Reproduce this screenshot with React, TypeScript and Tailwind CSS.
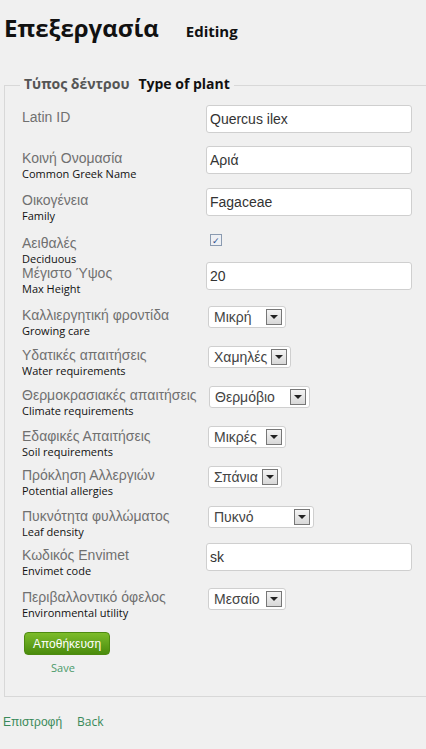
import React from "react";

const A = { fontFamily: '"Liberation Sans", Arial, sans-serif' };
const O = { fontFamily: '"Open Sans", "Noto Sans", sans-serif' };

function Sel({ v, w }: { v: string; w: number }) {
  return (
    <div className="flex items-center justify-between h-[22px] bg-white border border-[#cfcfcf] rounded-[3px] pl-[5px] pr-[3px]" style={{ width: w }}>
      <span className="text-[14px] text-[#444]" style={A}>{v}</span>
      <span className="w-[16px] h-[16px] border border-[#777] bg-gradient-to-b from-[#f4f4f4] to-[#d8d8d8] flex items-center justify-center">
        <span className="w-0 h-0 border-l-[4px] border-r-[4px] border-t-[4px] border-l-transparent border-r-transparent border-t-[#222]" />
      </span>
    </div>
  );
}

function Inp({ v }: { v: string }) {
  return (
    <div className="w-[206px] h-[28px] bg-white border border-[#cfcfcf] rounded-[3px] px-[3px] flex items-center text-[14px] text-[#333]" style={A}>{v}</div>
  );
}

function Row({ h, pt, gr, en, children }: { h: number; pt: number; gr: string; en?: string; children: React.ReactNode }) {
  return (
    <div className="flex" style={{ height: h }}>
      <div className="w-[201px] pl-[17px]" style={{ paddingTop: pt }}>
        <div className="text-[14px] leading-[18px] text-[#707070] whitespace-nowrap" style={A}>{gr}</div>
        {en && <div className="text-[11px] leading-[14px] text-[#111] whitespace-nowrap" style={O}>{en}</div>}
      </div>
      <div>{children}</div>
    </div>
  );
}

export default function App() {
  return (
    <div className="w-[426px] h-[749px] bg-[#f0f0f0] overflow-hidden relative">
      <div className="flex items-baseline pl-[4px] pt-[12px] h-[62px]">
        <span className="text-[24px] font-bold text-[#111] leading-[32px]" style={O}>Επεξεργασία</span>
        <span className="ml-[27px] text-[15px] font-bold text-[#111]" style={O}>Editing</span>
      </div>
      <div className="ml-[4px] mt-[23px] h-[612px] border border-[#d8d8d8] border-r-0 relative">
        <div className="absolute left-[15px] top-[-13px] bg-[#f0f0f0] px-[4px] flex items-baseline">
          <span className="text-[14px] font-bold text-[#555]" style={O}>Τύπος δέντρου</span>
          <span className="ml-[9px] text-[14px] font-bold text-[#111]" style={O}>Type of plant</span>
        </div>
        <div className="pt-[19px]">
          <Row h={41} pt={3} gr="Latin ID"><Inp v="Quercus ilex" /></Row>
          <Row h={42} pt={3} gr="Κοινή Ονομασία" en="Common Greek Name"><Inp v="Αριά" /></Row>
          <Row h={46} pt={3} gr="Οικογένεια" en="Family"><Inp v="Fagaceae" /></Row>
          <Row h={28} pt={0} gr="Αειθαλές" en="Deciduous">
            <div className="ml-[4px] w-[12px] h-[12px] border border-[#8a9ab0] bg-[#eef0f4] flex items-center justify-center text-[9px] text-[#2a4a8a] leading-none">✓</div>
          </Row>
          <Row h={44} pt={2} gr="Μέγιστο Ύψος" en="Max Height"><Inp v="20" /></Row>
          <Row h={40} pt={0} gr="Καλλιεργητική φροντίδα" en="Growing care"><div className="ml-[2px]"><Sel v="Μικρή" w={78} /></div></Row>
          <Row h={40} pt={0} gr="Υδατικές απαιτήσεις" en=" Water requirements"><div className="ml-[2px]"><Sel v="Χαμηλές" w={83} /></div></Row>
          <Row h={40} pt={0} gr="Θερμοκρασιακές απαιτήσεις" en=" Climate requirements"><div className="ml-[3px]"><Sel v="Θερμόβιο" w={101} /></div></Row>
          <Row h={40} pt={1} gr="Εδαφικές Απαιτήσεις" en="Soil requirements"><div className="ml-[2px]"><Sel v="Μικρές" w={78} /></div></Row>
          <Row h={40} pt={0} gr="Πρόκληση Αλλεργιών" en="Potential allergies"><div className="ml-[2px]"><Sel v="Σπάνια" w={74} /></div></Row>
          <Row h={37} pt={1} gr="Πυκνότητα φυλλώματος" en="Leaf density"><div className="ml-[2px]"><Sel v="Πυκνό" w={106} /></div></Row>
          <Row h={45} pt={3} gr="Κωδικός Envimet" en="Envimet code"><Inp v="sk" /></Row>
          <Row h={44} pt={0} gr="Περιβαλλοντικό όφελος" en="Environmental utility"><div className="ml-[2px]"><Sel v="Μεσαίο" w={78} /></div></Row>
        </div>
        <div className="ml-[19px] w-[86px] h-[23px] rounded-[4px] border border-[#4d8a10] bg-gradient-to-b from-[#7cbc2a] to-[#4a8c0c] flex items-center justify-center text-white text-[12px]" style={A}>Αποθήκευση</div>
        <div className="ml-[46px] mt-[5px] text-[11px] text-[#4a9a6a]" style={O}>Save</div>
      </div>
      <div className="flex pl-[3px] pt-[16px] text-[12px] text-[#3a8a5a]">
        <span style={A}>Επιστροφή</span>
        <span className="ml-[15px]" style={O}>Back</span>
      </div>
    </div>
  );
}
